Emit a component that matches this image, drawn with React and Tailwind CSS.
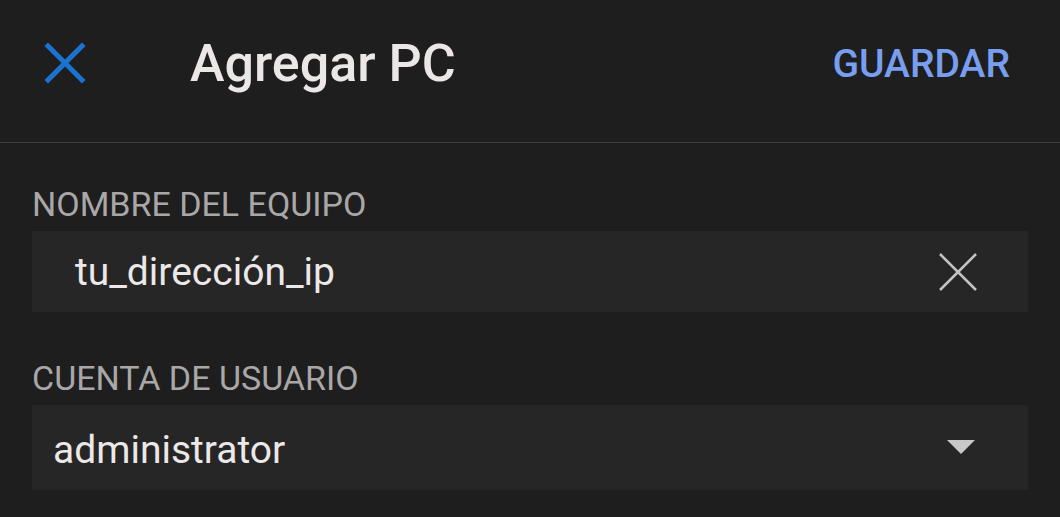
import React from "react";

export default function App() {
  return (
    <div className="w-[1060px] h-[517px] bg-[#1e1e1e] overflow-hidden" style={{ fontFamily: "Roboto, 'Liberation Sans', sans-serif" }}>
      <div className="h-[143px] border-b border-[#3e3e3e] flex items-center pb-[16px]">
        <div className="w-[190px] pl-[44px] flex items-center">
          <svg width="42" height="42" viewBox="0 0 42 42">
            <path d="M4 4 L38 38 M38 4 L4 38" stroke="#1a73d1" strokeWidth="5" strokeLinecap="square" fill="none" />
          </svg>
        </div>
        <div className="flex-1 text-[52px] leading-none font-medium text-[#ebe7e7] mt-[2px]">Agregar PC</div>
        <div className="pr-[50px] text-[39px] leading-none font-medium text-[#789ef0] mt-[2px]">GUARDAR</div>
      </div>
      <div className="px-[32px]">
        <div className="mt-[44px] text-[34px] leading-none text-[#a9a7a7]">NOMBRE DEL EQUIPO</div>
        <div className="mt-[10px] h-[81px] bg-[#262626] flex items-center pl-[43px] pr-[50px]">
          <div className="flex-1 text-[39px] leading-none text-[#ece8e8] pt-[2px]">tu_dirección_ip</div>
          <svg width="40" height="40" viewBox="0 0 40 40">
            <path d="M2 2 L38 38 M38 2 L2 38" stroke="#c4c4c4" strokeWidth="2.5" fill="none" />
          </svg>
        </div>
        <div className="mt-[49px] text-[34px] leading-none text-[#a9a7a7]">CUENTA DE USUARIO</div>
        <div className="mt-[10px] h-[85px] bg-[#262626] flex items-center pl-[21px] pr-[53px]">
          <div className="flex-1 text-[39px] leading-none text-[#ece8e8] pt-[6px]">administrator</div>
          <svg width="28" height="14" viewBox="0 0 28 14" className="mb-[2px]">
            <path d="M0 0 L28 0 L14 14 Z" fill="#c8c8c8" />
          </svg>
        </div>
      </div>
    </div>
  );
}
